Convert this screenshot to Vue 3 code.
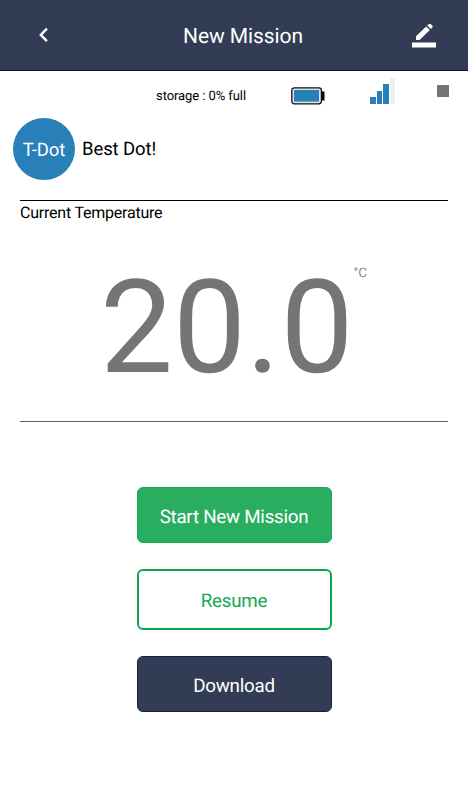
<template>
  <div class="screen">
    <header class="header">
      <button class="icon-btn" aria-label="Back">
        <svg width="12" height="16" viewBox="0 0 12 16">
          <path d="M9.9 1.7 3.8 7.9l6.1 6.2" fill="none" stroke="#fff" stroke-width="2.4" />
        </svg>
      </button>
      <h1 class="title">New Mission</h1>
      <button class="icon-btn" aria-label="Edit">
        <svg width="26" height="26" viewBox="0 0 26 26">
          <path d="M5 14.3 15.2 4.6l3.6 3.5L8.6 18H5z" fill="#fff" />
          <path d="m16.2 3.6 1.4-1.4a1.6 1.6 0 0 1 2.2 0l1.4 1.4a1.6 1.6 0 0 1 0 2.2l-1.3 1.3z" fill="#fff" />
          <path d="M1 20.5h24v5H1z" fill="#fff" />
        </svg>
      </button>
    </header>

    <div class="status">
      <span class="storage">storage : {{ storage }}% full</span>
      <svg class="battery" width="34" height="18" viewBox="0 0 34 18">
        <rect x="30" y="4.5" width="3.5" height="9" fill="#050505" />
        <rect x=".8" y=".8" width="29.6" height="16" rx="2.5" fill="#dfe3e6" stroke="#111" stroke-width="1.3" />
        <rect x="3" y="3" width="25" height="11.6" fill="#2980b9" />
      </svg>
      <div class="signal">
        <i
          v-for="(bar, i) in bars"
          :key="i"
          :class="{ on: i < signal }"
          :style="{ height: bar + 'px' }"
        />
      </div>
      <i class="stop" />
    </div>

    <div class="device">
      <div class="avatar">T-Dot</div>
      <div class="name">Best Dot!</div>
    </div>

    <section class="reading">
      <div class="label">Current Temperature</div>
      <div class="temperature">
        <span class="value">{{ temperature.toFixed(1) }}</span>
        <span class="unit">°C</span>
      </div>
    </section>

    <div class="actions">
      <button class="btn start">Start New Mission</button>
      <button class="btn resume">Resume</button>
      <button class="btn download">Download</button>
    </div>
  </div>
</template>

<script setup>
import { ref } from 'vue'

const storage     = ref(0)
const signal      = ref(3)
const temperature = ref(20)
const bars        = [7, 13, 20, 26]
</script>

<style>
body {
  background: #fff;
}
</style>

<style scoped>
.screen {
  box-sizing: border-box;
  width: 468px;
  height: 800px;
  overflow: hidden;
  background: #fff;
  color: #000;
  font-family: Roboto, sans-serif;
  text-rendering: geometricPrecision;
}

button {
  padding: 0;
  border: 0;
  background: none;
  font-family: inherit;
  text-rendering: inherit;
}

svg {
  display: block;
}

/* ── Header ───────────────────────── */
.header {
  box-sizing: border-box;
  display: flex;
  align-items: center;
  justify-content: space-between;
  height: 71px;
  padding: 0 31px 0 37px;
  border-bottom: 1px solid #0b0b35;
  background: #323c54;
}
.title {
  margin: 4px 0 0 26px;
  color: #fff;
  font-size: 21px;
  font-weight: 400;
  letter-spacing: -0.08px;
}

/* ── Status row ───────────────────── */
.status {
  display: flex;
  align-items: flex-start;
  height: 47px;
  padding-left: 156px;
}
.storage {
  width: 135px;
  padding-top: 17px;
  font-size: 13px;
  letter-spacing: -0.08px;
  line-height: 17px;
}
.battery {
  margin-top: 16px;
}
.signal {
  display: flex;
  align-items: flex-end;
  gap: 1px;
  height: 26px;
  margin: 7px 0 0 45px;
}
.signal i {
  width: 5.5px;
  background: #ecf0f1;
}
.signal i.on {
  background: #2980b9;
}
.stop {
  width: 12px;
  height: 12px;
  margin: 14px 0 0 42px;
  background: #757575;
}

/* ── Device ───────────────────────── */
.device {
  display: flex;
  align-items: center;
  gap: 7px;
  height: 62px;
  padding-left: 13px;
}
.avatar {
  width: 62px;
  height: 62px;
  border-radius: 50%;
  background: #2980b9;
  color: #fff;
  font-size: 18.5px;
  letter-spacing: -0.1px;
  line-height: 65px;
  text-align: center;
}
.name {
  font-size: 18.5px;
  letter-spacing: -0.1px;
  line-height: 60px;
}

/* ── Temperature ──────────────────── */
.reading {
  box-sizing: border-box;
  height: 222px;
  margin: 20px 20px 0;
  border-top: 1px solid #000;
  border-bottom: 1px solid #606060;
}
.label {
  padding-top: 2px;
  font-size: 16px;
  letter-spacing: -0.22px;
  line-height: 20px;
}
.temperature {
  display: flex;
  align-items: flex-start;
  padding: 29px 0 0 80px;
  color: #757575;
}
.value {
  font-size: 130px;
  line-height: 152px;
}
.unit {
  padding-top: 14px;
  color: #4a4a4a;
  font-size: 13px;
  font-weight: 300;
  line-height: 16px;
}

/* ── Actions ──────────────────────── */
.actions {
  display: flex;
  flex-direction: column;
  align-items: center;
  gap: 26px;
  padding-top: 65px;
}
.btn {
  box-sizing: border-box;
  width: 195px;
  height: 56px;
  padding-top: 3px;
  border-radius: 6px;
  font-size: 18.8px;
  letter-spacing: -0.27px;
}
.start {
  border: 1px solid #16a951;
  background: #29ae61;
  color: #fff;
}
.resume {
  height: 61px;
  border: 2px solid #0aa84c;
  color: #16a951;
}
.download {
  border: 1px solid #14204a;
  background: #323c54;
  color: #fff;
}
</style>
